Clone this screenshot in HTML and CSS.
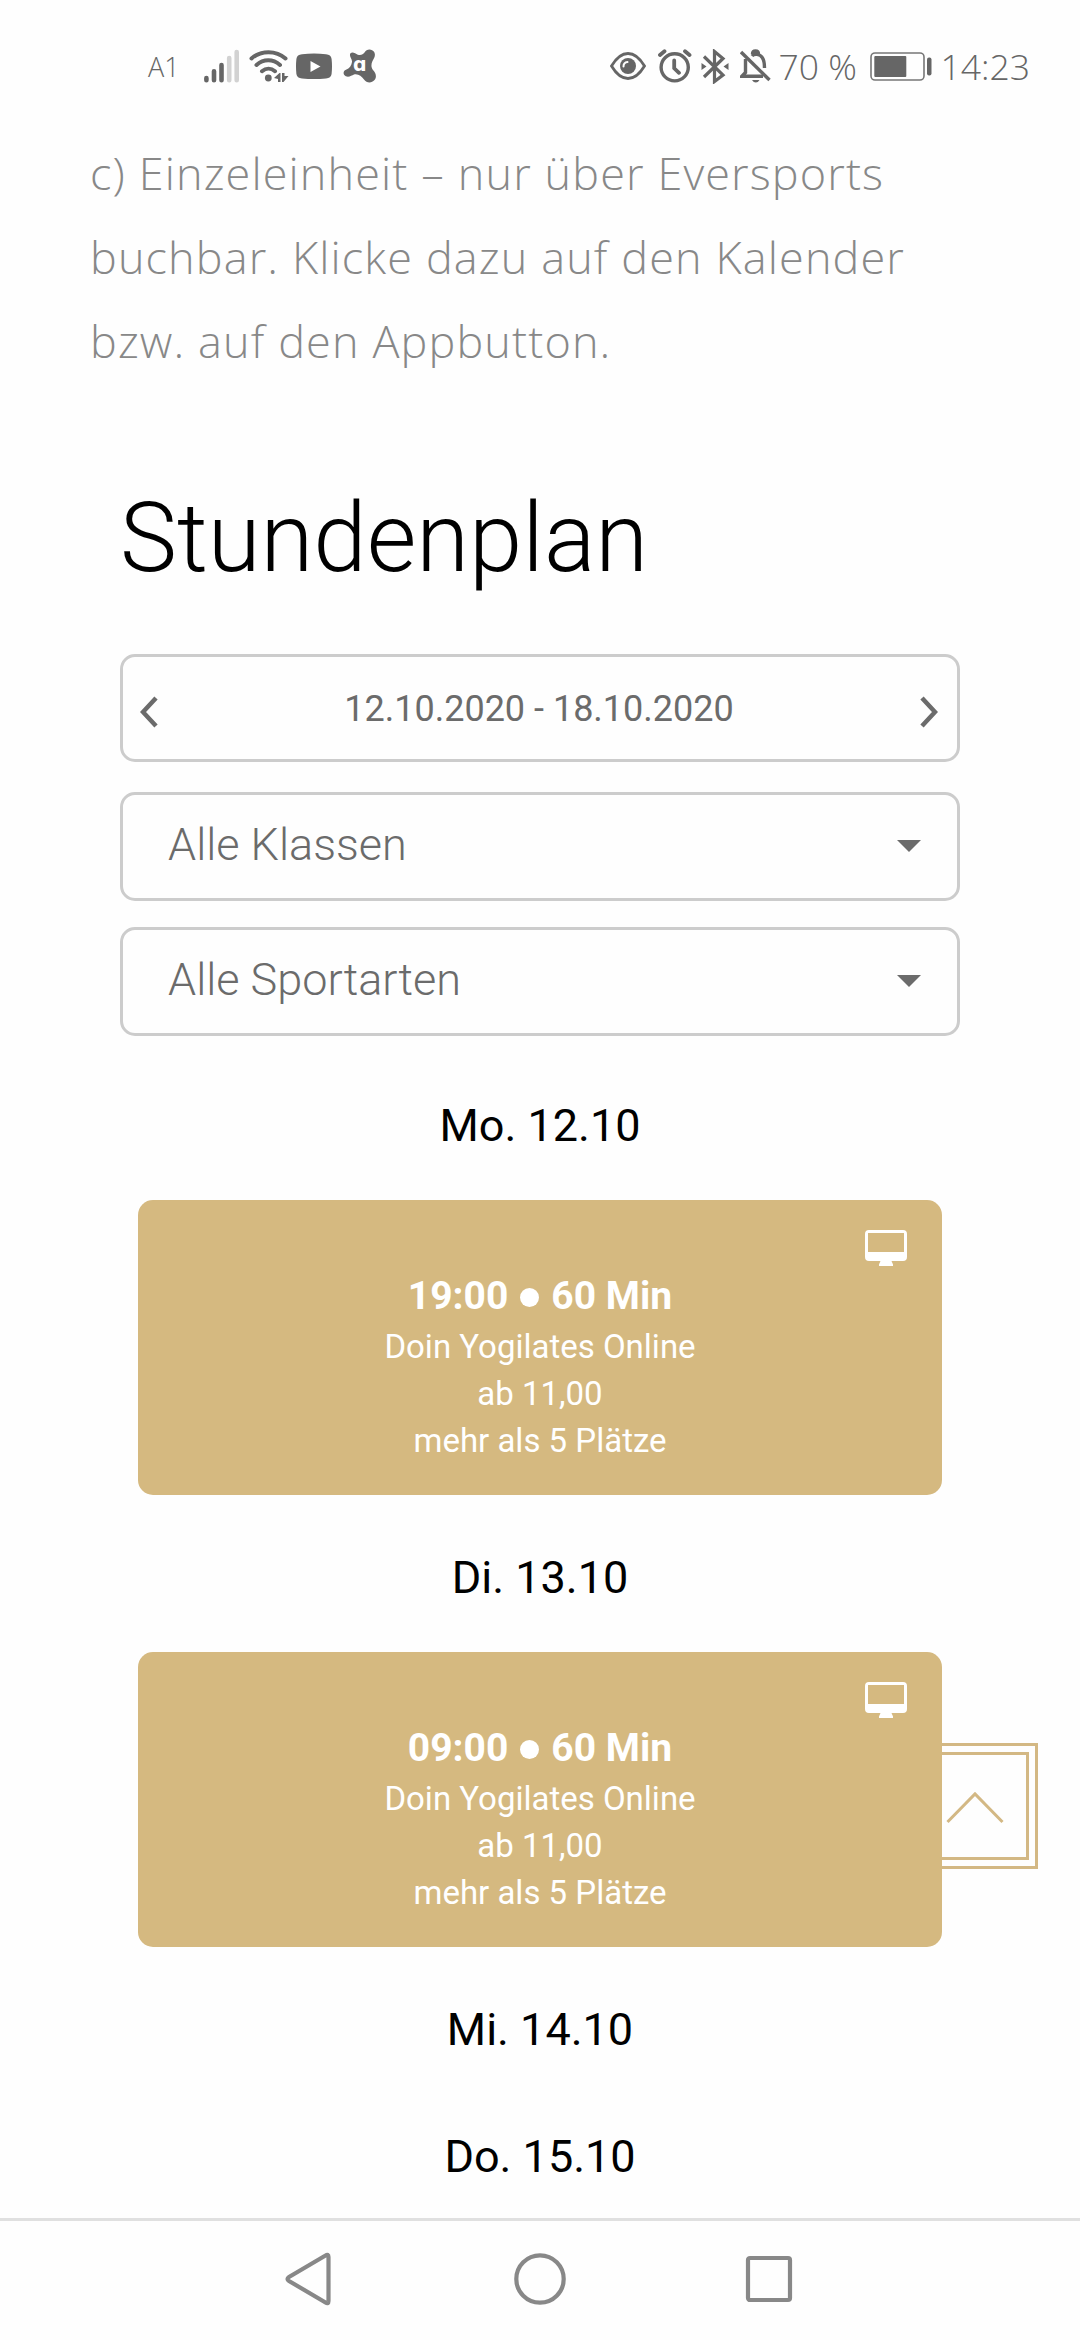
FILE: index.html
```html
<!DOCTYPE html>
<html lang="de">
<head>
  <meta charset="UTF-8">
  <title>Stundenplan</title>
  <link rel="stylesheet" href="styles.css">
</head>
<body>

  <header class="status-bar">
    <div class="status-left">
      <span class="carrier">A1</span>
      <svg class="signal" width="35" height="34" viewBox="0 0 35 34" stroke="#666" stroke-width="4.6" stroke-linecap="round">
        <path d="M2.4 29v2.2M10 22.300v9M17.500 16v15.200"/>
        <path stroke="#d2d2d2" d="M25.200 9v22.200M32.700 3v28.200"/>
      </svg>
      <svg class="wifi" width="40" height="34" viewBox="0 0 40 34" fill="none" stroke="#666" stroke-width="4" stroke-linecap="round">
        <path d="M2.500 9.500C12 1 27 1 36.500 9.500M7.500 16C14.500 9.800 24 9.800 31 16M13 22.200C17 18.800 22 18.800 26 22.200"/>
        <circle cx="19.300" cy="29" r="3.400" fill="#666" stroke="none"/>
        <path fill="#666" stroke="none" d="M25 29l5.500-5h1v9h-2.500v-3zM33 24h2.500v3h4L34.500 33H33z"/>
      </svg>
      <svg class="video" width="36" height="27" viewBox="0 0 36 27">
        <path fill="#666" d="M6 1.200Q18 0 30 1.200Q35 1.500 35.600 6Q36.400 13.500 35.600 21Q35 25 30 25.600Q18 26.600 6 25.600Q1 25 .4 21Q-.4 13.500 .4 6Q1 1.500 6 1.200Z"/>
        <path fill="#fff" d="M14.500 8v11l10-5.500z"/>
      </svg>
      <svg class="avast" width="34" height="34" viewBox="0 0 34 34">
        <path fill="#666" d="M7.500 4.200C10 2.500 12.500 5 14.800 5.700C18 6.500 20 5.500 21.500 3.500C23.500-.5 29-.5 31.200 3C33 6.500 31 9.500 29.500 12C28 15.500 28 18 30 21C33 24 34 28 31.500 31C28.500 34.500 23.500 34 21 30.500C18.500 27 15 24.500 11 25.500C8.500 26.500 6 28.500 2.800 27.200C-.3 25.500 0 22 3 20.800C6.500 19.300 8.500 16.500 9 13C9.300 9.500 5.500 7 7.500 4.200Z"/>
        <text class="avast-letter" x="16.800" y="22.300">ɑ</text>
      </svg>
    </div>
    <div class="status-right">
      <svg class="eye" width="36" height="28" viewBox="0 0 36 28">
        <path fill="none" stroke="#666" stroke-width="2.800" d="M1.500 14Q9 1.500 18 1.500T34.500 14Q27 26.500 18 26.500T1.500 14Z"/>
        <circle cx="18" cy="14" r="8" fill="#666"/>
        <path fill="none" stroke="#fff" stroke-width="2" stroke-linecap="round" d="M13.500 14.500q0-4 4-4.500"/>
      </svg>
      <svg class="alarm" width="34" height="34" viewBox="0 0 34 34" fill="none" stroke="#666" stroke-width="3.400" stroke-linecap="round">
        <circle cx="16.700" cy="18.300" r="13.600"/>
        <path d="M2 6l4.500-3.800M31.500 6L27 2.200M16.200 11.500v7.800l4.800 4.500" stroke-width="3.800"/>
      </svg>
      <svg class="bluetooth" width="28" height="35" viewBox="0 0 28 35" fill="none" stroke="#666" stroke-width="3.200">
        <path d="M3 7.500L22 26L13.500 32.500V2.500L22 9.500L3 28"/>
        <path fill="#666" stroke="none" d="M.5 14l5 3.500-5 3.500zM27.500 14l-5 3.500 5 3.500z"/>
      </svg>
      <svg class="bell" width="31" height="34" viewBox="0 0 31 34" fill="none" stroke="#666" stroke-width="3.400">
        <path d="M5.500 10v13.500L2 27.200H23M12 7C14 4.500 20 4.500 22.500 9Q24.500 12 24.500 19M12.500 5Q12.500 2 15.500 2T18.500 5"/>
        <path d="M1 3L29.500 31"/>
        <path fill="#666" stroke="none" d="M12 31h7.500q-1.500 2.500-3.700 2.500t-3.800-2.500z"/>
      </svg>
      <span class="percent">70 %</span>
      <svg class="battery" width="62" height="29" viewBox="0 0 62 29">
        <rect x="1" y="1" width="53" height="27" rx="4" fill="none" stroke="#777" stroke-width="1.600"/>
        <rect x="4.300" y="4" width="32" height="21" rx="1" fill="#666"/>
        <rect x="57" y="5.500" width="4.500" height="18" rx="2" fill="#666"/>
      </svg>
      <span class="clock">14:23</span>
    </div>
  </header>

  <main>
    <p class="intro">c) Einzeleinheit – nur über Eversports<br>buchbar. Klicke dazu auf den Kalender<br>bzw. auf den Appbutton.</p>

    <section class="schedule">
      <h1>Stundenplan</h1>

      <div class="field week">
        <svg width="18" height="32" viewBox="0 0 18 32"><path d="M16 2L3 16L16 30"/></svg>
        <span>12.10.2020 - 18.10.2020</span>
        <svg width="18" height="32" viewBox="0 0 18 32"><path d="M2 2L15 16L2 30"/></svg>
      </div>
      <div class="field select">Alle Klassen</div>
      <div class="field select">Alle Sportarten</div>

      <h2>Mo. 12.10</h2>
      <article class="card">
        <svg class="monitor" width="42" height="36" viewBox="0 0 42 36">
          <path fill="#fff" fill-rule="evenodd" d="M4 0H38Q42 0 42 4V27Q42 31 38 31H26.500L28 34.500V36H14V34.500L15.500 31H4Q0 31 0 27V4Q0 0 4 0ZM3 3V22H39V3Z"/>
        </svg>
        <h3>19:00 <span class="dot"></span> 60 Min</h3>
        <p>Doin Yogilates Online</p>
        <p>ab 11,00</p>
        <p>mehr als 5 Plätze</p>
      </article>

      <h2>Di. 13.10</h2>
      <article class="card">
        <svg class="monitor" width="42" height="36" viewBox="0 0 42 36">
          <path fill="#fff" fill-rule="evenodd" d="M4 0H38Q42 0 42 4V27Q42 31 38 31H26.500L28 34.500V36H14V34.500L15.500 31H4Q0 31 0 27V4Q0 0 4 0ZM3 3V22H39V3Z"/>
        </svg>
        <h3>09:00 <span class="dot"></span> 60 Min</h3>
        <p>Doin Yogilates Online</p>
        <p>ab 11,00</p>
        <p>mehr als 5 Plätze</p>
      </article>

      <h2>Mi. 14.10</h2>
      <h2>Do. 15.10</h2>
    </section>
  </main>

  <!-- back to top -->
  <a class="to-top" href="#">
    <svg width="60" height="34" viewBox="0 0 60 34"><path d="M2.500 31L30 3L57.500 31"/></svg>
  </a>

  <nav class="system-nav">
    <svg width="52" height="54" viewBox="0 0 52 54"><path d="M40.500 3.500Q43.500 1.500 43.500 5V49Q43.500 52.500 40.500 50.500L4 29Q1 27 4 25Z"/></svg>
    <svg width="52" height="54" viewBox="0 0 52 54"><circle cx="26" cy="27" r="23.700"/></svg>
    <svg width="52" height="54" viewBox="0 0 52 54"><rect x="5" y="6" width="42" height="42" rx="2"/></svg>
  </nav>

</body>
</html>
```
FILE: styles.css
```css
* {
  box-sizing: border-box;
}
body {
  display: flex;
  flex-direction: column;
  width: 1080px;
  height: 2340px;
  margin: 0;
  overflow: hidden;
  font-family: Roboto, sans-serif;
  background-color: #fefefe;
}
h1, h2, h3, p {
  margin: 0;
}
svg {
  flex: none;
  display: block;
}

/* status bar */
.status-bar {
  flex: none;
  display: flex;
  justify-content: space-between;
  height: 132px;
  padding: 0 50px 0 148px;
  font-family: "Open Sans", sans-serif;
  font-weight: 300;
  color: #666;
}
.status-left, .status-right {
  display: flex;
  align-items: center;
  height: 132px;
}
.carrier {
  width: 56px;
  font-size: 27px;
}
.wifi {
  margin-left: 10px;
}
.video {
  margin-left: 7px;
}
.avast {
  margin-left: 11px;
}
.avast-letter {
  font-family: "DejaVu Sans", sans-serif;
  font-size: 19px;
  font-weight: 700;
  text-anchor: middle;
  fill: #fff;
}
.alarm {
  margin-left: 12px;
}
.bluetooth {
  margin-left: 9px;
}
.bell {
  margin-left: 11px;
}
.percent, .clock {
  padding-bottom: 1px;
  font-size: 35.500px;
}
.percent {
  width: 91px;
  padding-left: 7px;
}
.battery {
  margin: 0 8px 0 8px;
}

main {
  flex: 1;
  min-height: 0;
  overflow: hidden;
}

/* text above the timetable */
.intro {
  margin-top: -1px;
  padding: 0 90px;
  font-family: "Open Sans", sans-serif;
  font-size: 45px;
  font-weight: 300;
  line-height: 84px;
  letter-spacing: 1.125px;
  color: #888;
  white-space: nowrap;
}

.schedule {
  padding: 99px 120px 0;
}
h1 {
  height: 172px;
  font-size: 96px;
  font-weight: 300;
  line-height: 112px;
  color: #000;
}
.field {
  display: flex;
  align-items: center;
  justify-content: space-between;
  height: 109px;
  border: 3px solid #ccc;
  border-radius: 15px;
  color: #6b6b6b;
}
.week {
  height: 108px;
  margin-bottom: 30px;
  padding: 8px 19px 0 17px;
  font-size: 36px;
}
.week span {
  padding-bottom: 7px;
}
.week path {
  fill: none;
  stroke: #6b6b6b;
  stroke-width: 4.500;
}
.select {
  margin-bottom: 26px;
  padding: 0 36px 4px 45px;
  font-size: 45px;
  font-weight: 300;
}
.select::after {
  content: "";
  margin-top: 2px;
  border: 12px solid transparent;
  border-top-color: #6b6b6b;
  border-bottom: 0;
}
h2 {
  height: 127px;
  padding-top: 28px;
  font-size: 45px;
  font-weight: 400;
  line-height: 50px;
  text-align: center;
  color: #000;
}
.select + h2 {
  margin-top: 37px;
}
.card {
  position: relative;
  height: 295px;
  margin: 0 18px 30px;
  padding-top: 71px;
  border-radius: 15px;
  background-color: #d5b980;
  color: #fff;
  font-size: 33px;
  line-height: 47px;
  text-align: center;
}
.monitor {
  position: absolute;
  top: 30px;
  right: 35px;
}
.card h3 {
  display: flex;
  align-items: center;
  justify-content: center;
  height: 51px;
  margin-bottom: 1px;
  font-size: 39px;
  font-weight: 700;
}
.dot {
  width: 19px;
  height: 19px;
  margin: 2px 12px 0;
  border-radius: 50%;
  background-color: #fff;
}

.to-top {
  position: absolute;
  z-index: -1;
  top: 1743px;
  left: 912px;
  display: flex;
  align-items: center;
  justify-content: center;
  width: 126px;
  height: 126px;
  padding-top: 4px;
  border: 3px solid #d3b884;
  outline: 3px solid #d3b884;
  outline-offset: -12px;
}
.to-top path {
  fill: none;
  stroke: #d3b884;
  stroke-width: 3;
}

.system-nav {
  flex: none;
  display: flex;
  justify-content: center;
  gap: 177px;
  height: 122px;
  padding-top: 31px;
  border-top: 3px solid #e0e0e0;
  background-color: #fefefe;
}
.system-nav svg {
  fill: none;
  stroke: #888;
  stroke-width: 4.200;
}
```
